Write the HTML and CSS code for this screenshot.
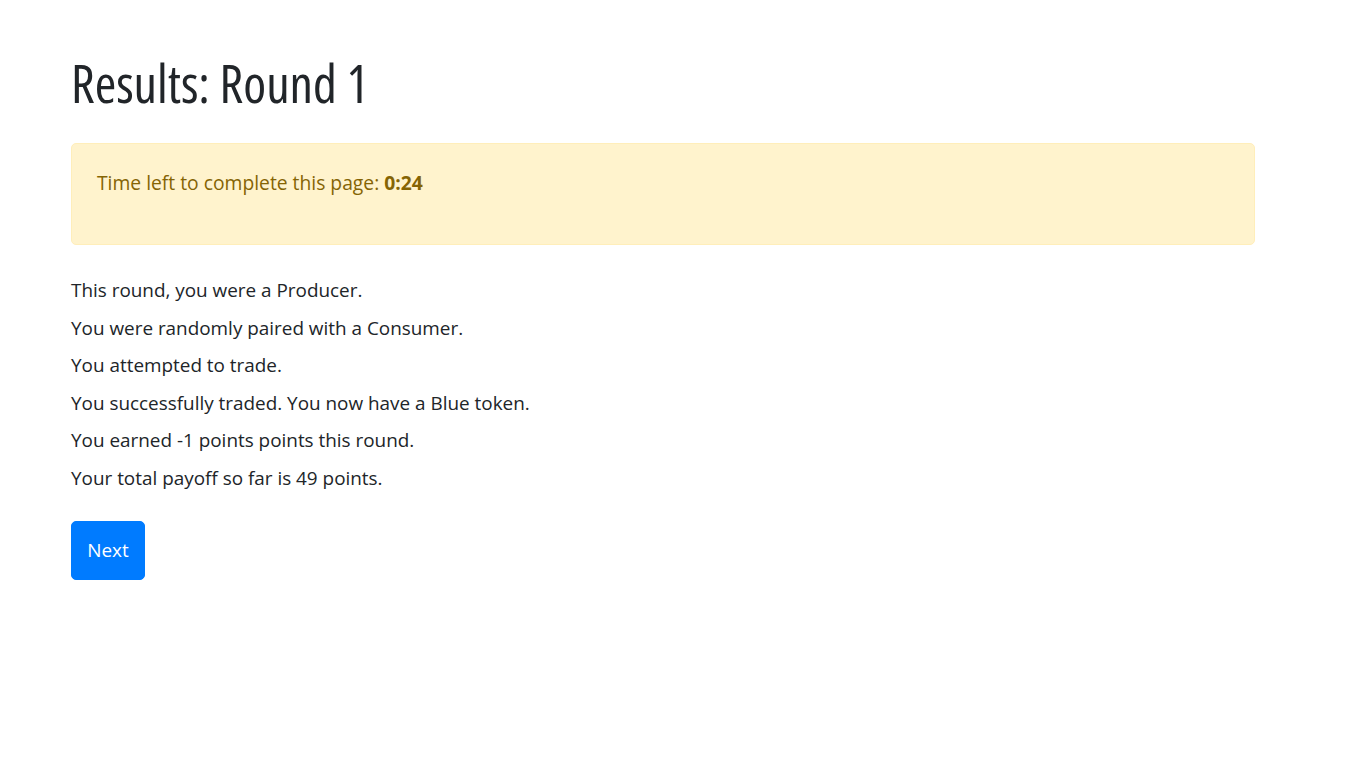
FILE: index.html
```html
<!DOCTYPE html>
<html lang="en">
<head>
<meta charset="utf-8">
<title>Results: Round 1</title>
<link rel="stylesheet" href="styles.css">
</head>
<body>
<div class="container">
  <h1 class="title">Results: Round 1</h1>
  <div class="alert">
    <p class="alert-text">Time left to complete this page: <b class="timer">0:24</b></p>
  </div>
  <div class="results">
    <div class="line">This round, you were a Producer.</div>
    <div class="line">You were randomly paired with a Consumer.</div>
    <div class="line">You attempted to trade.</div>
    <div class="line">You successfully traded. You now have a Blue token.</div>
    <div class="line">You earned -1 points points this round.</div>
    <div class="line">Your total payoff so far is 49 points.</div>
  </div>
  <button class="btn-next" type="button">Next</button>
</div>
</body>
</html>
```
FILE: styles.css
```css
html, body {
  margin: 0;
  padding: 0;
  background: #ffffff;
}
body {
  font-family: "Open Sans", "Noto Sans", sans-serif;
  color: #212529;
  font-size: 18.9px;
}
.container {
  width: 1184px;
  padding: 53px 0 0 71px;
}
.title {
  margin: 0 0 31px 0;
  font-size: 52px;
  line-height: 59px;
  font-weight: 500;
  font-stretch: condensed;
  color: #212529;
}
.alert {
  background: #fff3cd;
  border: 1px solid #ffeeba;
  border-radius: 5px;
  color: #856404;
  padding: 23px 25px 24px 25px;
}
.alert-text {
  margin: 0 0 22px 0;
  line-height: 31px;
  font-size: 19.3px;
}
.timer {
  font-weight: 700;
}
.results {
  margin-top: 27px;
}
.line {
  line-height: 37.6px;
}
.btn-next {
  display: block;
  margin-top: 23px;
  width: 74px;
  height: 59px;
  padding: 0;
  border: 1px solid #007bff;
  border-radius: 5px;
  background: #007bff;
  color: #ffffff;
  font-family: inherit;
  font-size: 18.9px;
  cursor: pointer;
}
```
